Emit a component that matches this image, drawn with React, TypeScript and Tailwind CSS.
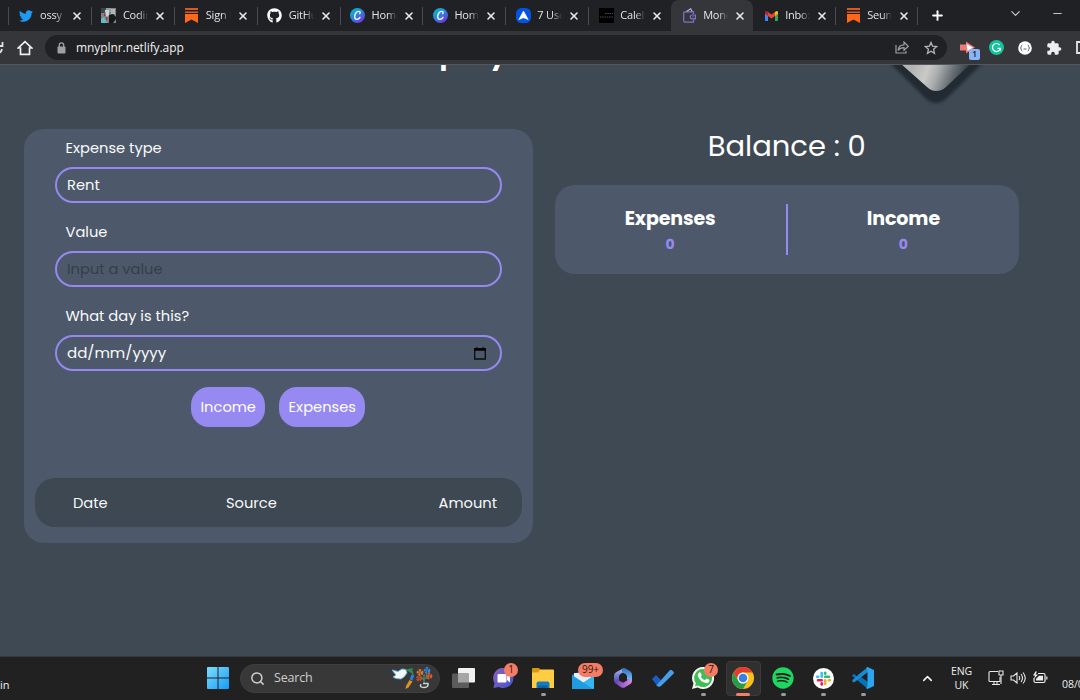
import React from "react";
import { FaTwitter, FaGithub, FaSpotify } from "react-icons/fa";
import { MdExtension } from "react-icons/md";
import { Search, ChevronUp, ChevronDown, Plus, X, Minus } from "lucide-react";

const Bookmark = () => (
  <svg width="13" height="15" viewBox="0 0 13 15">
    <path d="M0 0h13v2H0zM0 3.4h13v1.5H0z" fill="#d95a1c" />
    <path d="M0 6h13v9l-6.5-3.6L0 15z" fill="#ff6719" />
  </svg>
);

const Canva = ({ id }: { id: string }) => (
  <svg width="15" height="15" viewBox="0 0 15 15">
    <defs>
      <linearGradient id={id} x1="0" y1="0" x2="0.8" y2="1">
        <stop offset="0" stopColor="#00c4cc" />
        <stop offset="0.5" stopColor="#2a86d8" />
        <stop offset="1" stopColor="#7d2ae8" />
      </linearGradient>
    </defs>
    <circle cx="7.5" cy="7.5" r="7.5" fill={`url(#${id})`} />
    <path d="M9.8 5.7c.8-1.2.3-2.3-1-2.3C6.500 3.400 4.700 6 4.700 8.500c0 1.800.9 2.900 2.200 2.900 1.300 0 2.400-.9 3.100-2" stroke="#fff" strokeWidth="1.300" fill="none" strokeLinecap="round" />
  </svg>
);

const Gmail = () => (
  <svg width="13" height="10" viewBox="0 0 13 10">
    <path d="M0 1.500v7.700c0 .5.300.8.800.8H3V4z" fill="#4285f4" />
    <path d="M13 1.500v7.700c0 .5-.3.800-.8.800H10V4z" fill="#34a853" />
    <path d="M10 1l1-.7c1-.7 2 0 2 1.200v1.300L10 5z" fill="#fbbc04" />
    <path d="M3 1L2 .3C1 -.4 0 .300 0 1.500v1.300L3 5z" fill="#c5221f" />
    <path d="M3 1l3.500 2.600L10 1v4L6.500 7.600 3 5z" fill="#ea4335" />
  </svg>
);

const Wallet = () => (
  <svg width="13" height="15" viewBox="0 0 13 15" fill="none" stroke="#8472c8" strokeWidth="1.200">
    <path d="M10.500 6V3.800H1.600Q.7 3.800.7 4.800v8.200q0 1.200 1.200 1.200h8.600v-2.700" />
    <path d="M12.400 7H9.200a1.900 1.900 0 000 3.800h3.200zM9.500 8.900h1" />
    <path d="M3.500 3.600L7.700.8l1.500 2.700" stroke="#b9adea" />
  </svg>
);

const Photo = () => (
  <svg width="15" height="15" viewBox="0 0 15 15">
    <rect width="15" height="15" fill="#7b8583" />
    <path d="M0 0h5v5H0z" fill="#3d4645" />
    <path d="M5 0h5v4H5z" fill="#8fa09c" />
    <path d="M0 11l3-2 3 6H0z" fill="#65bcc4" />
    <path d="M4 2h4v5l-2 2-2-3z" fill="#c3d6de" />
    <path d="M3 4h1.500v4H3zM5 9h1.500v3H5z" fill="#a83a48" />
    <path d="M8 7l4-1 3 3v2l-3 4H8z" fill="#18191b" />
    <path d="M10 1h4v5h-4z" fill="#b1b7ae" />
  </svg>
);

const Ahead = () => (
  <svg width="15" height="15" viewBox="0 0 15 15">
    <rect width="15" height="15" rx="5.500" fill="#0553e5" />
    <path d="M7.500 3l4.700 8.600-4.700-1.900-4.700 1.900z" fill="#fff" stroke="#fff" strokeWidth=".6" strokeLinejoin="round" />
  </svg>
);

const Dark = () => (
  <svg width="15" height="15" viewBox="0 0 15 15">
    <rect width="15" height="15" fill="#000" />
    <path d="M6 5.500h8M1 9h13" stroke="#4c4c4c" strokeDasharray="1.500 .8" />
  </svg>
);

type TabData = { label: string; icon: React.ReactNode; active?: boolean; noLine?: boolean };
const tabs: TabData[] = [
  { label: "ossy", icon: <FaTwitter size={14} color="#1d9bf0" /> },
  { label: "Codin", icon: <Photo /> },
  { label: "Sign i", icon: <Bookmark /> },
  { label: "GitHu", icon: <FaGithub size={15} color="#fff" /> },
  { label: "Home", icon: <Canva id="canvaA" /> },
  { label: "Home", icon: <Canva id="canvaB" /> },
  { label: "7 Use", icon: <Ahead /> },
  { label: "Caleb", icon: <Dark /> },
  { label: "Mone", icon: <Wallet />, active: true },
  { label: "Inbox", icon: <Gmail />, noLine: true },
  { label: "Seun", icon: <Bookmark /> },
];

const BrowserTab = ({ t, late }: { t: TabData; late: boolean }) => (
  <div
    className={
      "flex h-[31px] shrink-0 items-center " +
      (late ? "w-[82px] " : "w-[82.9px] ") +
      (t.active ? "rounded-t-lg bg-[#35363a]" : "")
    }
  >
    <div className={"h-[18px] w-px " + (t.active || t.noLine ? "" : "bg-[#4a4b4f]")} />
    <div className="ml-[9px] flex w-4 shrink-0 justify-center">{t.icon}</div>
    <div className="ml-[6px] w-[25px] shrink-0 overflow-hidden whitespace-nowrap [mask-image:linear-gradient(to_right,#000_62%,transparent)]">
      {t.label}
    </div>
    <X size={12} strokeWidth={3.200} className="ml-[6px] shrink-0 text-[#e6e7e9]" />
  </div>
);

const TabStrip = () => (
  <div className="flex h-[31px] items-center bg-[#202124] pl-2 font-['Open_Sans','Noto_Sans',sans-serif] text-[11px] font-medium tracking-[-0.200px] text-[#e2e4e7]">
    {tabs.map((t, i) => (
      <BrowserTab key={i} t={t} late={i > 7} />
    ))}
    <div className="h-[18px] w-px bg-[#4a4b4f]" />
    <Plus size={15} strokeWidth={3} className="ml-[12px] shrink-0 text-white" />
    <ChevronDown size={15} strokeWidth={1.800} className="mb-1 ml-[63px] shrink-0 text-[#c8c9cb]" />
    <Minus size={13} strokeWidth={1.800} className="mb-1 ml-[28px] shrink-0 text-[#c8c9cb]" />
  </div>
);

const Toolbar = () => (
  <div className="flex h-[34px] items-center overflow-hidden border-b border-[#55575b] bg-[#35363a]">
    <svg width="4" height="14" viewBox="0 0 4 14" className="shrink-0">
      <path d="M2.500 1v4H-1M2 8Q1.500 11-1 12" stroke="#e0e1e3" strokeWidth="1.800" fill="none" />
    </svg>
    <svg width="16" height="16" viewBox="0 0 16 16" className="ml-[13px] shrink-0">
      <path d="M8 1.700L1.300 8h2.200v6.300h9V8h2.200z" fill="none" stroke="#eeeef0" strokeWidth="1.700" />
    </svg>
    <div className="ml-3 flex h-[25px] w-[902px] shrink-0 items-center rounded-full bg-[#202124] pl-[12px]">
      <svg width="9" height="12" viewBox="0 0 9 12">
        <path d="M2.300 5V3a2.200 2.200 0 014.400 0v2" stroke="#9aa0a6" strokeWidth="1.300" fill="none" />
        <rect x=".5" y="4.500" width="8" height="7" rx=".8" fill="#9aa0a6" />
      </svg>
      <span className="ml-[10px] font-['Open_Sans','Noto_Sans',sans-serif] text-[12px] tracking-[-0.080px] text-[#f0f0f1]">
        mnyplnr.netlify.app
      </span>
      <svg width="14" height="13" viewBox="0 0 14 13" className="ml-auto" fill="none" stroke="#9c9ea2" strokeWidth="1.200">
        <path d="M1 4v8h10v-2M3 9.500C3.400 6 5.500 4 9 3.900V1l4.300 4.300L9 9.300V6.600C6 6.600 4.200 7.800 3 9.500z" />
      </svg>
      <svg width="14" height="14" viewBox="0 0 14 14" className="ml-[15px] mr-[9px]" fill="none" stroke="#b2b4b7" strokeWidth="1.300">
        <path d="M7 1.400l1.600 3.800 4.100.4-3.100 2.700.9 4L7 10.200l-3.500 2.100.9-4-3.100-2.700 4.100-.4z" />
      </svg>
    </div>
    <div className="relative ml-[13px] h-5 w-5 shrink-0">
      <svg width="15" height="13" viewBox="0 0 15 13" className="mt-[3px]">
        <path d="M6 .5l9 6-9 6V9.500H0v-6h6z" fill="#ef7878" />
        <path d="M6.500 3L13 6.500 7.500 10z" fill="#fff" />
      </svg>
      <span className="absolute left-[9px] top-[11px] flex h-[11px] w-[11px] items-center justify-center rounded-[2px] bg-[#8ab4f8] font-['Open_Sans',sans-serif] text-[9px] font-semibold text-[#202124]">
        1
      </span>
    </div>
    <svg width="15" height="15" viewBox="0 0 15 15" className="ml-[9px] shrink-0">
      <circle cx="7.500" cy="7.500" r="7.500" fill="#15c39a" />
      <path d="M10.600 5A4 4 0 1011.400 8.300H8.500M11.400 8.300v2.500" stroke="#fff" strokeWidth="1.200" fill="none" />
    </svg>
    <svg width="14" height="14" viewBox="0 0 14 14" className="ml-[14px] shrink-0">
      <circle cx="7" cy="7" r="6.800" fill="#fff" />
      <path d="M4.300 4Q3.300 4 3.300 5.500T2.300 7q1 0 1 1.500T4.300 10M9.700 4q1 0 1 1.500T11.700 7q-1 0-1 1.500T9.700 10M5.500 8h3" stroke="#444" fill="none" strokeWidth=".8" />
    </svg>
    <MdExtension size={16} color="#eeeef0" className="ml-[14px] shrink-0" />
    <svg width="4" height="13" viewBox="0 0 4 13" className="ml-[14px] shrink-0">
      <path d="M5 1H1v11h4" stroke="#e6e6e8" strokeWidth="1.800" fill="none" />
    </svg>
  </div>
);

const Field = ({ label, children }: { label: string; children: React.ReactNode }) => (
  <div className="mb-[11px] flex flex-col">
    <span className="ml-[10.500px] h-[37px] leading-[36px]">{label}</span>
    <div className="flex h-9 items-center justify-between rounded-[18px] border-2 border-[#9588ee] pl-[10px] pr-[13px]">
      {children}
    </div>
  </div>
);

const ExpenseCard = () => (
  <section className="mt-[64px] flex h-[413.500px] w-[508.500px] flex-col rounded-[20px] bg-[#4d596b]">
    <div className="ml-[31px] mt-[1px] w-[447px]">
      <Field label="Expense type">
        <span>Rent</span>
      </Field>
      <Field label="Value">
        <span className="text-[#343e49]">Input a value</span>
      </Field>
      <Field label="What day is this?">
        <span className="text-[15px]">dd/mm/yyyy</span>
        <svg width="12" height="13" viewBox="0 0 12 13" className="mr-[1px]">
          <path d="M.7 2h10.600v10H.7z" stroke="#0b0c0e" strokeWidth="1.300" fill="none" />
          <path d="M.1 1.300h11.800v2.500H.1zM2 .2h1.400v2H2zM8.600.2H10v2H8.600z" fill="#000" />
        </svg>
      </Field>
    </div>
    <div className="mt-[5px] flex h-10 justify-center gap-[14px] text-white">
      <button className="w-[74px] rounded-[18px] bg-[#9689f2]">Income</button>
      <button className="w-[86px] rounded-[18px] bg-[#9689f2]">Expenses</button>
    </div>
    <div className="mx-[11px] mt-[51px] flex h-[49px] w-[487px] items-center rounded-[20px] bg-[#3d4853] pl-[38px] pr-[25px]">
      <span className="w-[153px]">Date</span>
      <span>Source</span>
      <span className="ml-auto">Amount</span>
    </div>
  </section>
);

const Total = ({ label }: { label: string }) => (
  <div className="flex flex-1 flex-col items-center font-bold">
    <span className="mt-[2px] text-[19px] leading-[26px] tracking-[-0.100px] text-white">{label}</span>
    <span className="text-[14px] leading-[24px] text-[#9689f2]">0</span>
  </div>
);

const Gem = () => (
  <svg width="110" height="44" viewBox="0 0 110 44" className="absolute left-[883px] top-0">
    <defs>
      <linearGradient id="gem" gradientUnits="userSpaceOnUse" x1="30" y1="0" x2="78" y2="18">
        <stop offset="0" stopColor="#b4b4b4" />
        <stop offset=".3" stopColor="#c9c9c8" />
        <stop offset=".5" stopColor="#aaacad" />
        <stop offset=".75" stopColor="#6d757b" />
        <stop offset="1" stopColor="#3a434d" />
      </linearGradient>
      <filter id="gemBlur" x="-20%" y="-20%" width="140%" height="140%">
        <feGaussianBlur stdDeviation="1.700" />
      </filter>
      <filter id="edgeBlur">
        <feGaussianBlur stdDeviation=".6" />
      </filter>
    </defs>
    <path d="M-1-10L43 34Q53 42 63 34L108-10z" fill="#222932" filter="url(#gemBlur)" />
    <path d="M8-10L44 22Q48 26 53 26Q59 26 63 22L97-10z" fill="url(#gem)" filter="url(#edgeBlur)" />
  </svg>
);

const Page = () => (
  <main className="relative flex h-[591px] overflow-hidden bg-[#3e4954] pl-6 font-['Poppins','Inter','Liberation_Sans',sans-serif] text-[14.670px] text-[#f8f9fa]">
    <div className="absolute left-[439px] top-[-33px] flex w-[80px] text-[32px] font-semibold leading-[40px] text-white">
      <span className="w-[50px]">p</span>
      <span>y</span>
    </div>
    <Gem />
    <ExpenseCard />
    <section className="ml-[22px] mt-[60px] w-[464.500px]">
      <h2 className="h-[60px] text-center text-[29px] font-normal leading-[42px] text-white">Balance : 0</h2>
      <div className="flex h-[89px] items-center rounded-[20px] bg-[#4d596b]">
        <Total label="Expenses" />
        <div className="h-[51px] w-[2px] bg-[#9689f2]" />
        <Total label="Income" />
      </div>
    </section>
  </main>
);

const Slot = ({ children, badge, dot, active }: { children: React.ReactNode; badge?: string; dot?: boolean; active?: boolean }) => (
  <div className="relative flex h-[43px] w-10 shrink-0 items-center justify-center">
    {active && <div className="absolute left-[3px] top-[4px] h-[35px] w-[35px] rounded-[4px] border border-[#3b3b3b] bg-[#303030]" />}
    <div className="relative">{children}</div>
    {badge && (
      <span
        className={
          "absolute top-[6px] flex h-[14px] items-center justify-center rounded-full bg-[#f47c64] font-['Open_Sans',sans-serif] text-[10px] text-[#301a16] " +
          (badge.length > 1 ? "left-[15px] w-[25px]" : "left-[21px] w-[14px]")
        }
      >
        {badge}
      </span>
    )}
    {(dot || active) && (
      <span
        className={
          "absolute bottom-[4px] rounded-full " + (active ? "h-[3px] w-[14px] bg-[#f08069]" : "h-[3px] w-[5px] bg-[#9b9b9b]")
        }
      />
    )}
  </div>
);

const TaskView = () => (
  <svg width="23" height="20" viewBox="0 0 23 20">
    <rect x="6" width="17" height="14.500" rx="1" fill="#f1f1f1" />
    <path d="M0 6.500q0-1 1-1h15q1 0 1 1V19q0 1-1 1H1q-1 0-1-1z" fill="#5b5b5b" />
    <path d="M6 5.500h10q1 0 1 1v8H6z" fill="#a5a5a5" />
  </svg>
);

const Chat = () => (
  <svg width="21" height="20" viewBox="0 0 21 20">
    <defs>
      <linearGradient id="chat" x1="0" y1="0" x2="1" y2="1">
        <stop stopColor="#8c62b8" />
        <stop offset="1" stopColor="#4355cc" />
      </linearGradient>
    </defs>
    <path d="M10.500 0a10 10 0 110 20c-2 0-3.300-.4-4.500-1L.5 20l1-5A10 10 0 0110.500 0z" fill="url(#chat)" />
    <rect x="4.500" y="6" width="9" height="8.500" rx="1" fill="#fff" />
    <path d="M14 8.500L17 6v8.500l-3-2.500z" fill="#fff" />
  </svg>
);

const Folder = () => (
  <svg width="22" height="20" viewBox="0 0 22 20">
    <path d="M0 1q0-1 1-1h6l2 3-3 4H0z" fill="#d99710" />
    <path d="M8 1.500h13q1 0 1 1V20H0V4.500h6z" fill="#ffcd44" />
    <path d="M4.500 20v-4.500q0-2 2-2h9q2 0 2 2V20z" fill="#1579c4" />
    <path d="M6.500 17.500h9V20h-9z" fill="#0e5f9e" />
  </svg>
);

const Mail = () => (
  <svg width="22" height="18" viewBox="0 0 22 18" className="mt-[4px]">
    <path d="M0 4L11-1l11 5v13q0 1-1 1H1q-1 0-1-1z" fill="#1680c8" />
    <path d="M2 2h18v4l-9 6-9-6z" fill="#e6edf5" />
    <path d="M0 5l11 7 11-7v12q0 1-1 1H1q-1 0-1-1z" fill="#36b5ee" />
    <path d="M0 4v13q0 1 1 1h20z" fill="#1f9be2" />
  </svg>
);

const M365 = () => (
  <svg width="18" height="20" viewBox="0 0 18 20">
    <defs>
      <linearGradient id="ma" x1="0" y1="0" x2="0" y2="1"><stop stopColor="#b9c0ed" /><stop offset=".5" stopColor="#6f7fd0" /><stop offset="1" stopColor="#5b35aa" /></linearGradient>
      <linearGradient id="mb" x1="0" y1="0" x2="0" y2="1"><stop stopColor="#2f6fc0" /><stop offset="1" stopColor="#7cc4f8" /></linearGradient>
      <linearGradient id="mc" x1="0" y1="0" x2="1" y2="0"><stop stopColor="#6e3eba" /><stop offset="1" stopColor="#d68be4" /></linearGradient>
    </defs>
    <path d="M10 0L2 4.300Q0 5.500 0 8v4.500q0 2 1.500 3L5 13.500V8.500Q5 7 6.500 6L11 3.500z" fill="url(#ma)" />
    <path d="M8 .5q2-.9 4 .3l4.500 2.700Q18 4.500 18 7v6l-5-2V8.500Q13 7 11.500 6L8 4.200z" fill="url(#mb)" />
    <path d="M1 15l4-2.500 3 1.700q1 .5 2 0l3-1.700V11l5 1v1q0 2-1.700 3L11 19.300q-2 1-4 0z" fill="url(#mc)" />
  </svg>
);

const Check = () => (
  <svg width="22" height="18" viewBox="0 0 22 18">
    <path d="M0 10l4-4 6 6-3 5q-1 .6-2-.4z" fill="#1d5dc3" />
    <path d="M4.500 16.200L18 1q1-.8 2 .2l1.500 1.600q.8 1 0 2L9 17q-2 1.600-4 0z" fill="#459fe9" />
  </svg>
);

const WhatsAppIcon = () => (
  <svg width="22" height="22" viewBox="0 0 22 22">
    <path d="M11 0a11 11 0 11-5.400 20.500L0 22l1.500-5.500A11 11 0 0111 0z" fill="#f5f8f5" />
    <path d="M11 2a9 9 0 11-4.900 16.500L3 19.300l.9-3A9 9 0 0111 2z" fill="#40be55" />
    <path d="M7.200 5.500q1-.4 1.600.4l.9 2.200q0 .7-.9 1.600 1.500 2.600 4 3.600l1.300-1.500q.5-.3 1 0l2 1q.6.4.2 1.400-1 2.200-3.500 1.800-6-1.200-8-7.200-.3-2 1.400-3.300z" fill="#fff" />
  </svg>
);

const Chrome = () => (
  <svg width="22" height="22" viewBox="0 0 22 22">
    <circle cx="11" cy="11" r="11" fill="#fbc116" />
    <path d="M1.500 5.500A11 11 0 0120.500 5.500H11a5.500 5.500 0 00-4.800 8.200z" fill="#e33b2e" />
    <path d="M1.500 5.500l4.700 8.200A5.500 5.500 0 0011 16.500q2.500 0 4.500-2.500L11 22A11 11 0 011.500 5.500z" fill="#269b4b" />
    <circle cx="11" cy="11" r="5.500" fill="#fff" />
    <circle cx="11" cy="11" r="4.300" fill="#357fe8" />
  </svg>
);

const Slack = () => (
  <svg width="21" height="21" viewBox="0 0 21 21">
    <circle cx="10.500" cy="10.500" r="10.500" fill="#fff" />
    <g strokeWidth="2.600" strokeLinecap="round">
      <path d="M8.700 5v3.800M4.200 8.800h1" stroke="#36c5f0" />
      <path d="M12.200 8.800H16M12.200 4.700v1" stroke="#2eb67d" />
      <path d="M12.200 12.300V16M15.800 12.300h1" stroke="#ecb22e" />
      <path d="M8.700 12.300H5M8.700 15.400v1" stroke="#e01e5a" />
    </g>
  </svg>
);

const VSCode = () => (
  <svg width="22" height="22" viewBox="0 0 22 22">
    <path d="M16 0L5.500 9.600 2 7 .4 7.800v1.500L16 22V15L6 7.800z" fill="#0872b8" />
    <path d="M16 5L2 15.400l-1.600-.8v-1.500L16 0z" fill="#198bd1" />
    <path d="M15.500 0L22 3v16l-6.500 3-1.500-1 1.500-1.500v-17L14 1z" fill="#2aa5ee" />
  </svg>
);

const SearchArt = () => (
  <svg width="42" height="22" viewBox="0 0 42 22">
    <path d="M1 3l6 1.500L11 2l4 .5L16 6l-3 4-3 2-5-.5L2 10l3-2z" fill="#f3f8fc" stroke="#6db3e0" strokeWidth=".9" />
    <path d="M16 3l5-1-1 3zM21 4l1 4" stroke="#348955" strokeWidth="1.400" fill="#348955" />
    <path d="M22 8l-2 5" stroke="#2b7fd0" strokeWidth="3" />
    <path d="M18.500 13l3 1.500-4 6-3 1.500.5-3z" fill="#d9951b" />
    <path d="M33 17V7M33 13l-4-4M34 12l4-4" stroke="#43855f" strokeWidth="1.500" />
    <g strokeWidth="3" strokeDasharray="1.700 .7" fill="none">
      <circle cx="29" cy="5.500" r="1.900" stroke="#e07a2c" />
      <circle cx="36" cy="3.500" r="1.900" stroke="#3487dc" />
      <circle cx="38" cy="9" r="1.900" stroke="#d65a30" />
      <circle cx="28" cy="11.500" r="1.600" stroke="#c24c32" />
    </g>
    <path d="M30 17q-2 3.500 3 3.500 5-.5 4-4h-5" fill="none" stroke="#d2d5d5" strokeWidth="1.500" />
  </svg>
);

const Taskbar = () => (
  <footer className="flex h-[44px] items-center overflow-hidden border-t border-[#363a3e] bg-[#212121] pb-px font-['Open_Sans','Noto_Sans',sans-serif] text-[#eeeeee]">
    <span className="mt-[14px] w-[207px] shrink-0 text-[11px]">in</span>
    <svg width="22" height="22" viewBox="0 0 22 22" className="shrink-0">
      <defs>
        <linearGradient id="win" x1="0" y1="0" x2="1" y2="1">
          <stop stopColor="#7edcff" />
          <stop offset="1" stopColor="#159cf5" />
        </linearGradient>
      </defs>
      <path d="M1 0h9.500v10.500H0V1q0-1 1-1zM11.500 0H21q1 0 1 1v9.500H11.500zM0 11.500h10.500V22H1q-1 0-1-1zM11.500 11.500H22V21q0 1-1 1h-9.500z" fill="url(#win)" />
    </svg>
    <div className="ml-[11px] flex h-[29px] w-[200px] shrink-0 items-center rounded-full border border-[#404040] bg-[#383838] pl-[9px] pr-[6px] text-[12.500px] text-[#cecece]">
      <Search size={15} strokeWidth={2.400} />
      <span className="ml-[9px] tracking-[-0.200px]">Search</span>
      <div className="ml-auto"><SearchArt /></div>
    </div>
    <div className="ml-[3px] flex">
      <Slot><TaskView /></Slot>
      <Slot badge="1"><Chat /></Slot>
      <Slot dot><Folder /></Slot>
      <Slot badge="99+"><Mail /></Slot>
      <Slot><M365 /></Slot>
      <Slot><Check /></Slot>
      <Slot badge="7" dot><WhatsAppIcon /></Slot>
      <Slot active><Chrome /></Slot>
      <Slot dot><FaSpotify size={22} color="#1ed760" /></Slot>
      <Slot dot><Slack /></Slot>
      <Slot dot><VSCode /></Slot>
    </div>
    <ChevronUp size={15} strokeWidth={2.600} className="ml-[37px] shrink-0" />
    <div className="ml-[14px] w-[25px] shrink-0 text-center text-[10.500px] leading-[14px] tracking-[-0.100px]">
      ENG<br />UK
    </div>
    <svg width="16" height="16" viewBox="0 0 16 16" className="ml-[14px] shrink-0" fill="none" stroke="#e8e8e8" strokeWidth="1.100">
      <path d="M10 1.500H2q-1 0-1 1v8q0 1 1 1h10V7M4 14.500h8M6 12v2M9 12v2" />
      <path d="M11 1h4v4h-4zM13 5v9" />
    </svg>
    <svg width="17" height="14" viewBox="0 0 17 14" className="ml-[6px] shrink-0" fill="none" stroke="#e8e8e8" strokeWidth="1.100">
      <path d="M1 5h2.500L7 2v10L3.500 9H1zM9 5q1.500 2 0 4M11 3q3 4 0 8M13 1.500q4.500 5.500 0 11" />
    </svg>
    <svg width="16" height="14" viewBox="0 0 16 14" className="ml-[5px] shrink-0" fill="none" stroke="#eee" strokeWidth="1.200">
      <path d="M6 2.500h5.500q1.500 0 1.500 1.500v6q0 1.500-1.500 1.500h-8Q2 11.500 2 10V7M14.800 5.500v3" />
      <path d="M7 4.700h4v4.800H4V8z" fill="#eee" stroke="none" />
      <path d="M3.500.5L1 4.500h2L2 8l4-4.500H3.500L5 .5z" fill="#eee" stroke="none" />
    </svg>
    <span className="ml-[14px] mt-[14px] w-[20px] shrink-0 overflow-hidden whitespace-nowrap text-[10.500px]">08/0</span>
  </footer>
);

export default function App() {
  return (
    <div className="h-[700px] w-[1080px] overflow-hidden bg-[#212121]">
      <TabStrip />
      <Toolbar />
      <Page />
      <Taskbar />
    </div>
  );
}
